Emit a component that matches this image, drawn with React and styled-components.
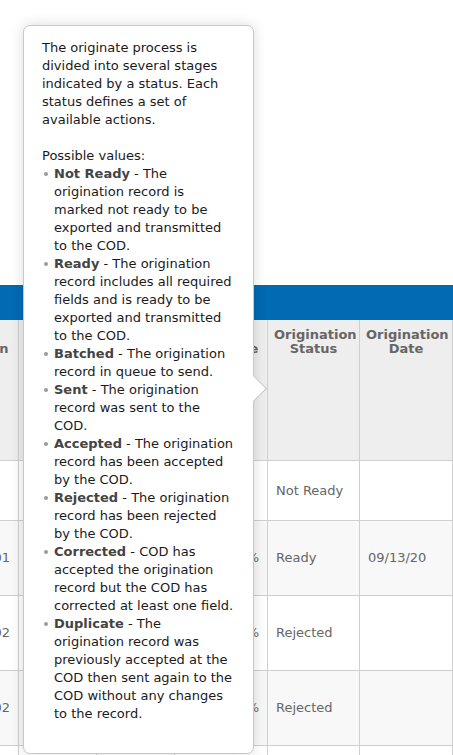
import React from 'react'
import styled, { createGlobalStyle } from 'styled-components';

const statuses = [
  { name: 'Not Ready', text: 'The origination record is marked not ready to be exported and transmitted to the COD.' },
  { name: 'Ready', text: 'The origination record includes all required fields and is ready to be exported and transmitted to the COD.' },
  { name: 'Batched', text: 'The origination record in queue to send.' },
  { name: 'Sent', text: 'The origination record was sent to the COD.' },
  { name: 'Accepted', text: 'The origination record has been accepted by the COD.' },
  { name: 'Rejected', text: 'The origination record has been rejected by the COD.' },
  { name: 'Corrected', text: 'COD has accepted the origination record but the COD has corrected at least one field.' },
  { name: 'Duplicate', text: 'The origination record was previously accepted at the COD then sent again to the COD without any changes to the record.' },
];

const columns = [
  { label: 'Award Designation', width: 108 },
  { label: 'Award Year', width: 78 },
  { label: 'Award Amount', width: 78 },
  { label: 'Fee Allowance', width: 93 },
  { label: 'Origination Status', width: 92 },
  { label: 'Origination Date', width: 93 },
  { label: 'Last Updated', width: 90 },
];

const rows = [
  { id: '', pct: '', status: 'Not Ready', date: '', height: 60 },
  { id: 'P20210001', pct: '100%', status: 'Ready', date: '09/13/20', height: 75 },
  { id: 'P20210002', pct: '100%', status: 'Rejected', date: '', height: 75 },
  { id: 'P20210002', pct: '100%', status: 'Rejected', date: '', height: 75 },
  { id: 'P20210003', pct: '100%', status: 'Ready', date: '', height: 75 },
];

function App() {
  return (
    <>
      <GlobalStyle />
      <Page>
        <TitleBar />
        <Table>
          <colgroup>
            {columns.map((c) => <col key={c.label} style={{ width: c.width }} />)}
          </colgroup>
          <thead>
            <tr>
              {columns.map((c) => <HeadCell key={c.label}>{c.label}</HeadCell>)}
            </tr>
          </thead>
          <tbody>
            {rows.map((r, i) => (
              <Row key={i} $striped={i % 2 === 1} style={{ height: r.height }}>
                <Cell $right>{r.id}</Cell>
                <Cell>2021</Cell>
                <Cell $right>$5,000</Cell>
                <Cell $right>{r.pct}</Cell>
                <Cell>{r.status}</Cell>
                <Cell>{r.date}</Cell>
                <Cell></Cell>
              </Row>
            ))}
          </tbody>
        </Table>

        <Tooltip>
          <Intro>
            The originate process is divided into several stages indicated by a status. Each status defines a set of available actions.
          </Intro>
          <Label>Possible values:</Label>
          <List>
            {statuses.map((s) => (
              <Item key={s.name}>
                <strong>{s.name}</strong> - {s.text}
              </Item>
            ))}
          </List>
          <Arrow />
        </Tooltip>
      </Page>
    </>
  )
}

const GlobalStyle = createGlobalStyle`
  html, body {
    margin: 0;
    padding: 0;
    background: #fff;
    overflow: hidden;
  }
  body {
    font-family: "DejaVu Sans", Verdana, sans-serif;
    font-size: 13px;
  }
`;

const Page = styled.div`
  position: relative;
  width: 453px;
  height: 755px;
  overflow: hidden;
  padding-top: 285px;
  box-sizing: border-box;
`;

const TitleBar = styled.div`
  height: 35px;
  background: #006ab3;
`;

const Table = styled.table`
  table-layout: fixed;
  border-collapse: collapse;
  width: 632px;
  margin-left: -90px;
  color: #666;
  font-size: 13px;
`;

const HeadCell = styled.th`
  height: 140px;
  padding: 8px 6px;
  box-sizing: border-box;
  vertical-align: top;
  text-align: center;
  font-weight: bold;
  line-height: 14px;
  color: #666;
  background: #eeeeee;
  border: 1px solid #cfcfcf;
  border-top: none;
`;

const Row = styled.tr`
  background: ${(p) => (p.$striped ? '#f8f8f8' : '#fff')};
`;

const Cell = styled.td`
  padding: 0 8px;
  vertical-align: middle;
  text-align: ${(p) => (p.$right ? 'right' : 'left')};
  border: 1px solid #cfcfcf;
  white-space: nowrap;
  overflow: hidden;
`;

const Tooltip = styled.div`
  position: absolute;
  left: 23px;
  top: 25px;
  width: 231px;
  height: 729px;
  box-sizing: border-box;
  padding: 13px 19px 0 18px;
  background: #fff;
  border: 1px solid #c8c8c8;
  border-radius: 7px;
  box-shadow: 0 0 14px rgba(0, 0, 0, 0.14);
  color: #1a1a1a;
  font-size: 13px;
  line-height: 18px;
`;

const Intro = styled.p`
  margin: 0 0 18px;
`;

const Label = styled.div`
  margin: 0;
`;

const List = styled.ul`
  list-style: none;
  margin: 0;
  padding: 0 0 0 12px;
`;

const Item = styled.li`
  position: relative;

  &::before {
    content: '';
    position: absolute;
    left: -10px;
    top: 7px;
    width: 4px;
    height: 4px;
    border-radius: 50%;
    background: #9a9a9a;
  }

  strong {
    color: #444;
    font-weight: bold;
  }
`;

const Arrow = styled.span`
  position: absolute;
  right: -10px;
  top: 353px;
  width: 18px;
  height: 18px;
  background: #fff;
  border-top: 1px solid #c8c8c8;
  border-right: 1px solid #c8c8c8;
  transform: rotate(45deg);
`;

export default App
